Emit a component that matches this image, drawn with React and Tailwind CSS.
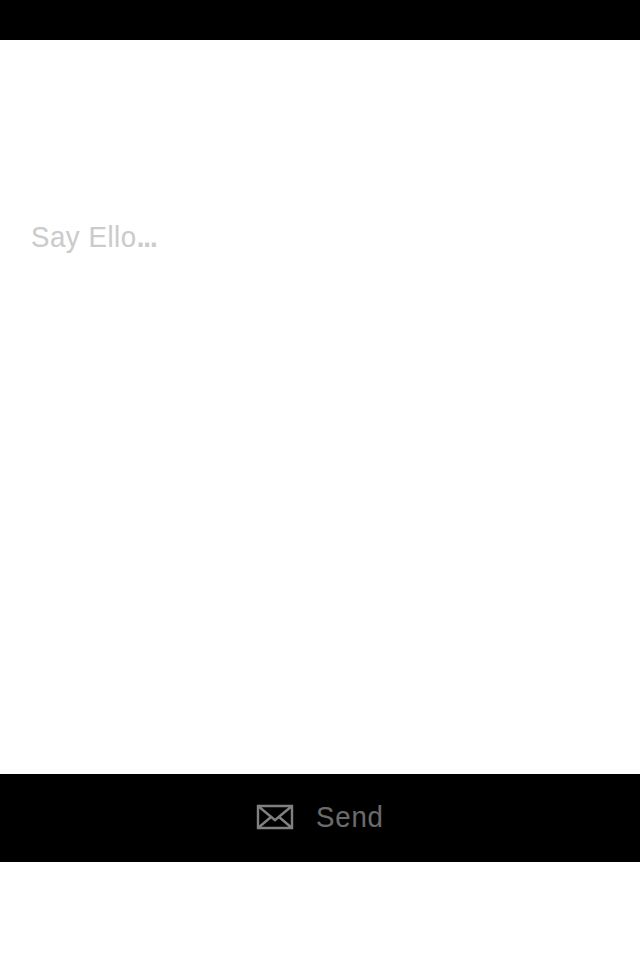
export default function App() {
  return (
    <div className="flex h-screen w-full flex-col bg-white font-['Liberation_Sans',Arial,sans-serif]">
      <header className="h-10 shrink-0 bg-black" />
      <main className="flex-1 px-[31px] pt-[177px]">
        <p className="text-[30px] leading-10 text-[#cbcbcb]">
          <span className="inline-block origin-left scale-x-[0.92] tracking-[0.6px] [-webkit-text-stroke:0.1px_#cbcbcb]">
            Say Ello<span className="font-bold tracking-[-1.1px] [-webkit-text-stroke:0]">...</span>
          </span>
        </p>
      </main>
      <button className="flex h-[88px] w-full shrink-0 items-center bg-black pb-0.5 pl-64 text-[#6b6b6b]">
        <svg className="h-[26px] w-[38px]" viewBox="0 0 38 26" fill="none" stroke="#808080" strokeWidth="2.4">
          <path d="M2 2H36V24H2ZM2 2L16.5 14L19 16.2L21.5 14L36 2M2 24L15 13M36 24L23 13" />
        </svg>
        <span className="ml-[22px] inline-block origin-left scale-x-[0.92] text-[30px] leading-10 tracking-[0.9px] [-webkit-text-stroke:0.1px_#6b6b6b]">Send</span>
      </button>
      <footer className="h-[98px] shrink-0 bg-white" />
    </div>
  );
}
